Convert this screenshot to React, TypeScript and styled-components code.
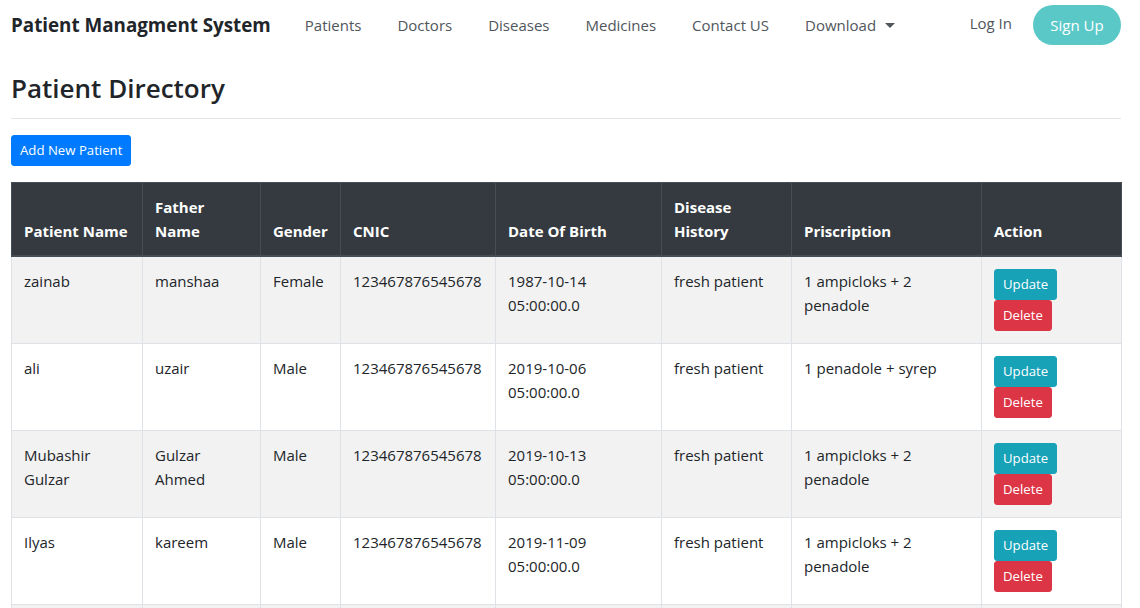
import React from "react";
import styled, { createGlobalStyle } from "styled-components";

const Global = createGlobalStyle`
  * { box-sizing: border-box; }
  body {
    margin: 0;
    font-family: "Open Sans", "Noto Sans", Arial, sans-serif;
    font-size: 15px;
    line-height: 24px;
    color: #212529;
    background: #fff;
  }
`;

const Page = styled.div`
  padding: 0 19px 0 11px;
`;

const Navbar = styled.nav`
  height: 50px;
  display: flex;
  align-items: center;
`;

const Brand = styled.div`
  font-size: 18.8px;
  font-weight: 700;
  color: #212529;
  margin-right: 16px;
  white-space: nowrap;
`;

const NavList = styled.ul`
  list-style: none;
  margin: 0;
  padding: 0;
  display: flex;
  align-items: center;
  flex: 1;
`;

const NavLink = styled.li`
  padding: 0 18px;
  color: #50565c;
  font-size: 15px;
  white-space: nowrap;
  display: flex;
  align-items: center;
`;

const Caret = styled.span`
  display: inline-block;
  margin-left: 9px;
  border-top: 5px solid #50565c;
  border-left: 5px solid transparent;
  border-right: 5px solid transparent;
`;

const Right = styled.div`
  display: flex;
  align-items: center;
  gap: 21px;
`;

const LogIn = styled.span`
  color: #50565c;
  font-size: 15px;
  margin-top: -4px;
`;

const SignUp = styled.button`
  height: 40px;
  width: 88px;
  border: none;
  border-radius: 20px;
  background: #5bc8c8;
  color: #fff;
  font-family: inherit;
  font-size: 15px;
`;

const Title = styled.h3`
  margin: 21px 0 0;
  font-size: 26px;
  font-weight: 600;
  line-height: 34px;
  color: #212529;
`;

const Rule = styled.hr`
  margin: 13px 0 16px;
  border: 0;
  border-top: 1px solid rgba(0, 0, 0, 0.1);
`;

type BtnKind = "primary" | "info" | "danger";
const colors: Record<BtnKind, string> = {
  primary: "#007bff",
  info: "#17a2b8",
  danger: "#dc3545",
};

const SmallBtn = styled.button<{ $kind: BtnKind }>`
  display: inline-block;
  height: 31px;
  padding: 0 8px;
  border: 1px solid ${(p) => colors[p.$kind]};
  background: ${(p) => colors[p.$kind]};
  color: #fff;
  font-family: inherit;
  font-size: 13.2px;
  line-height: 29px;
  border-radius: 3px;
`;

const Table = styled.table`
  margin-top: 16px;
  width: 1110px;
  border-collapse: collapse;
  table-layout: fixed;
`;

const Th = styled.th`
  background: #343a40;
  color: #fff;
  border: 1px solid #454d55;
  border-bottom-width: 2px;
  padding: 12px;
  text-align: left;
  vertical-align: bottom;
  font-weight: 700;
  font-size: 15px;
`;

const Tr = styled.tr<{ $striped: boolean }>`
  background: ${(p) => (p.$striped ? "#f2f2f2" : "#fff")};
`;

const Td = styled.td`
  border: 1px solid #dee2e6;
  padding: 12px;
  vertical-align: top;
  color: #212529;
`;

const EmptyTd = styled.td`
  border: 1px solid #dee2e6;
  height: 40px;
`;

const Actions = styled.div`
  display: flex;
  flex-direction: column;
  align-items: flex-start;
`;

const widths = [131, 118, 80, 155, 166, 130, 190, 140];
const headers = [
  "Patient Name",
  "Father Name",
  "Gender",
  "CNIC",
  "Date Of Birth",
  "Disease History",
  "Priscription",
  "Action",
];

const rows = [
  ["zainab", "manshaa", "Female", "123467876545678", "1987-10-14 05:00:00.0", "fresh patient", "1 ampicloks + 2 penadole"],
  ["ali", "uzair", "Male", "123467876545678", "2019-10-06 05:00:00.0", "fresh patient", "1 penadole + syrep"],
  ["Mubashir Gulzar", "Gulzar Ahmed", "Male", "123467876545678", "2019-10-13 05:00:00.0", "fresh patient", "1 ampicloks + 2 penadole"],
  ["Ilyas", "kareem", "Male", "123467876545678", "2019-11-09 05:00:00.0", "fresh patient", "1 ampicloks + 2 penadole"],
];

const navItems = ["Patients", "Doctors", "Diseases", "Medicines", "Contact US"];

export default function App() {
  return (
    <>
      <Global />
      <Page>
        <Navbar>
          <Brand>Patient Managment System</Brand>
          <NavList>
            {navItems.map((n) => (
              <NavLink key={n}>{n}</NavLink>
            ))}
            <NavLink>
              Download
              <Caret />
            </NavLink>
          </NavList>
          <Right>
            <LogIn>Log In</LogIn>
            <SignUp>Sign Up</SignUp>
          </Right>
        </Navbar>
        <Title>Patient Directory</Title>
        <Rule />
        <SmallBtn $kind="primary">Add New Patient</SmallBtn>
        <Table>
          <colgroup>
            {widths.map((w, i) => (
              <col key={i} style={{ width: w }} />
            ))}
          </colgroup>
          <thead>
            <tr>
              {headers.map((h) => (
                <Th key={h}>{h}</Th>
              ))}
            </tr>
          </thead>
          <tbody>
            {rows.map((r, i) => (
              <Tr key={i} $striped={i % 2 === 0}>
                {r.map((c, j) => (
                  <Td key={j}>{c}</Td>
                ))}
                <Td>
                  <Actions>
                    <SmallBtn $kind="info">Update</SmallBtn>
                    <SmallBtn $kind="danger">Delete</SmallBtn>
                  </Actions>
                </Td>
              </Tr>
            ))}
            <Tr $striped={true}>
              {widths.map((_, i) => (
                <EmptyTd key={i} />
              ))}
            </Tr>
          </tbody>
        </Table>
      </Page>
    </>
  );
}
